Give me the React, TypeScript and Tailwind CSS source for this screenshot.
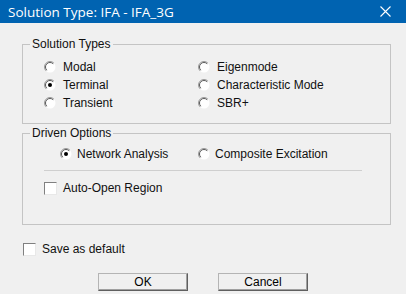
const font = "font-['Liberation_Sans',Arial,sans-serif]";

function Radio({ checked }: { checked?: boolean }) {
  return (
    <svg width="12" height="12" viewBox="0 0 12 12" className="shrink-0">
      <circle cx="6" cy="6" r="5.5" fill="#fff" />
      <path d="M9.9 2.1 A5.5 5.5 0 0 0 2.1 9.9" fill="none" stroke="#9a9a9a" strokeWidth="1" />
      <path d="M9.2 2.8 A4.5 4.5 0 0 0 2.8 9.2" fill="none" stroke="#5a5a5a" strokeWidth="1" />
      {checked && <circle cx="6" cy="6" r="2" fill="#000" />}
    </svg>
  );
}

function Check() {
  return (
    <span className="block w-[13px] h-[13px] shrink-0 bg-white border border-t-[#808080] border-l-[#808080] border-r-[#e8e8e8] border-b-[#e8e8e8]" />
  );
}

function Option({ label, checked, gap }: { label: string; checked?: boolean; gap: string }) {
  return (
    <div className={`flex items-center h-[18px] ${gap}`}>
      <Radio checked={checked} />
      <span>{label}</span>
    </div>
  );
}

function Button({ children }: { children: string }) {
  return (
    <button className="w-[90px] h-[18px] flex items-center justify-center bg-[#f0f0f0] border border-t-[#b4b4b4] border-l-[#b4b4b4] border-r-[#5f5f5f] border-b-[#5f5f5f] shadow-[inset_-1px_-1px_0_#a0a0a0] text-[12px] text-black">
      {children}
    </button>
  );
}

export default function App() {
  return (
    <div className={`w-[406px] h-[294px] bg-[#f0f0f0] overflow-hidden ${font} text-[12px] leading-[14px] text-[#111]`}>
      {/* Title bar */}
      <div className="h-[23px] bg-[#0063b1] flex items-center justify-between pl-[8px] pr-[15px]">
        <span className="text-white text-[13.5px] font-['Open_Sans','Noto_Sans',sans-serif]">
          Solution Type: IFA - IFA_3G
        </span>
        <svg width="11" height="11" viewBox="0 0 11 11">
          <path d="M0.5 0.5 L10.5 10.5 M10.5 0.5 L0.5 10.5" stroke="#fff" strokeWidth="1.1" />
        </svg>
      </div>

      <div className="px-[22px] pt-[14px]">
        {/* Solution Types */}
        <fieldset className="w-[369px] border border-[#c4c4c4] pt-[7px] pb-[11px]">
          <legend className="ml-[7px] px-[2px] leading-[14px]">Solution Types</legend>
          <div className="grid grid-cols-[154px_1fr] pl-[21px]">
            <Option label="Modal" gap="gap-[7px]" />
            <Option label="Eigenmode" gap="gap-[7px]" />
            <Option label="Terminal" checked gap="gap-[7px]" />
            <Option label="Characteristic Mode" gap="gap-[7px]" />
            <Option label="Transient" gap="gap-[7px]" />
            <Option label="SBR+" gap="gap-[7px]" />
          </div>
        </fieldset>

        {/* Driven Options */}
        <fieldset className="mt-[2px] w-[369px] border border-[#c4c4c4] pt-[5px] pb-[29px]">
          <legend className="ml-[7px] px-[2px] leading-[14px]">Driven Options</legend>
          <div className="grid grid-cols-[138px_1fr] pl-[37px]">
            <Option label="Network Analysis" checked gap="gap-[5px]" />
            <Option label="Composite Excitation" gap="gap-[5px]" />
          </div>
          <div className="ml-[21px] mt-[7px] w-[318px] h-px bg-[#cfcfcf]" />
          <div className="ml-[21px] mt-[10px] flex items-center gap-[6px] h-[14px]">
            <Check />
            <span>Auto-Open Region</span>
          </div>
        </fieldset>

        {/* Save as default */}
        <div className="mt-[17px] flex items-center gap-[6px] h-[14px] pl-px">
          <Check />
          <span>Save as default</span>
        </div>
      </div>

      {/* Buttons */}
      <div className="mt-[17px] flex justify-center gap-[30px]">
        <Button>OK</Button>
        <Button>Cancel</Button>
      </div>
    </div>
  );
}
